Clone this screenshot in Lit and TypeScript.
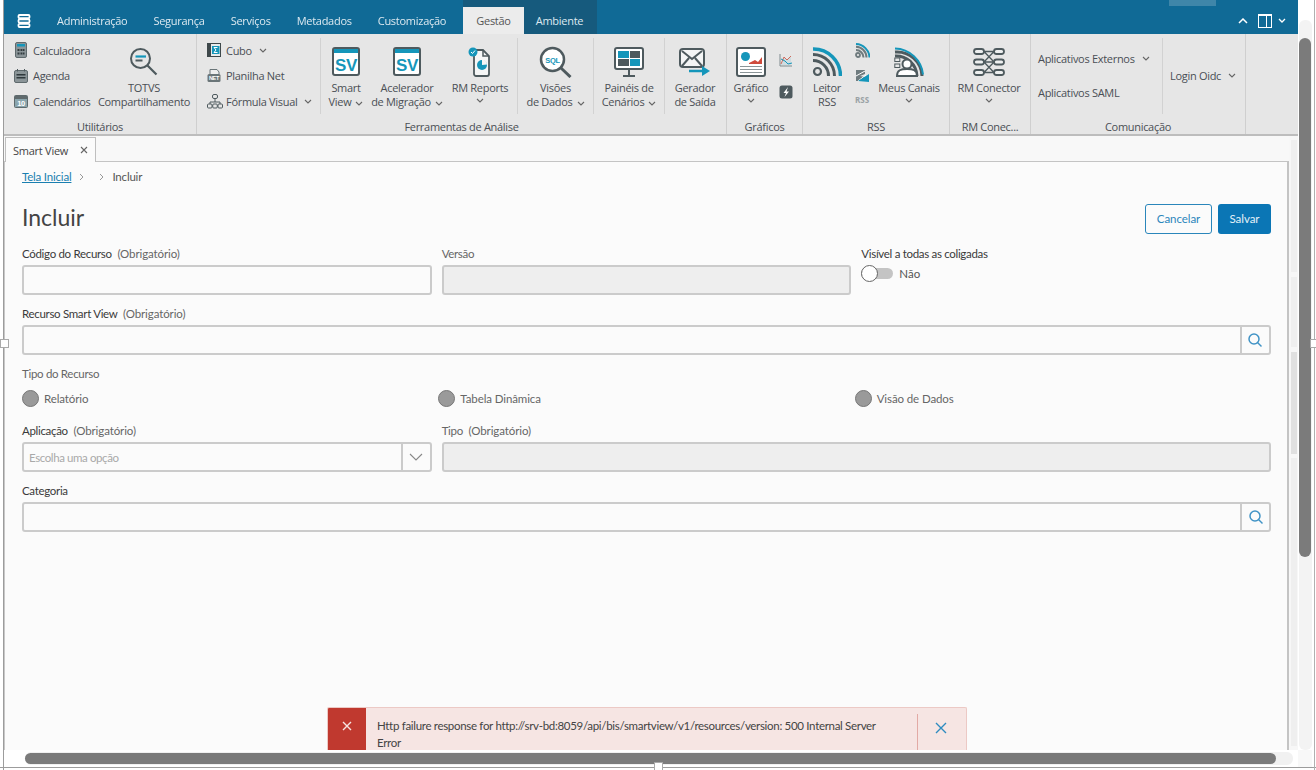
import { LitElement, html, css, svg } from "lit";
import { customElement } from "lit/decorators.js";

const D = "#4e5a5e";
const T = "#1596ba";
const chev = html`<svg class="chev" width="8" height="5" viewBox="0 0 8 5"><path d="M1 1l3 3 3-3" fill="none" stroke="#666" stroke-width="1.1"/></svg>`;

const ic = (w: number, h: number, body: any) => html`<svg width=${w} height=${h} viewBox="0 0 ${w} ${h}">${body}</svg>`;

const icons = {
  calc: ic(14, 16, svg`<rect x="1.5" y="0.5" width="11" height="15" rx="1.5" fill="#8b9598" stroke="#5f6a6d"/><rect x="3" y="2" width="8" height="2.5" fill="${T}"/><path d="M3.5 7h2v2h-2zM6.5 7h2v2h-2zM9 7h1.5v2H9zM3.5 10.500h2v2h-2zM6.5 10.500h2v2h-2zM9 10.500h1.500v2H9z" fill="#333d40"/>`),
  agenda: ic(14, 14, svg`<rect x="0.5" y="1.500" width="13" height="12" rx="1.500" fill="#8b9598" stroke="#5f6a6d"/><path d="M2.500 5h9v1.500h-9zM2.500 8h9v1.500h-9z" fill="#2f393c"/><path d="M3.500 0v2.500M10.500 0v2.500" stroke="#4e5a5e"/>`),
  cal: ic(14, 14, svg`<rect x="0.5" y="1.500" width="13" height="12" rx="1" fill="#8aa5ad" stroke="#5f6a6d"/><path d="M1 2h12v3H1z" fill="#5f6a6d"/><text x="7" y="11.800" font-size="7.500" font-family="Liberation Sans" font-weight="700" text-anchor="middle" fill="#fff">10</text>`),
  totvs: ic(30, 30, svg`<circle cx="11.500" cy="11.500" r="9.500" fill="none" stroke="${D}" stroke-width="2"/><path d="M18.500 18.500l9 9" stroke="${D}" stroke-width="2.200"/><path d="M6.500 9.500h10.500" stroke="${T}" stroke-width="2.200"/><path d="M6.500 13.500h7" stroke="${D}" stroke-width="2"/>`),
  cubo: ic(14, 14, svg`<rect x="0.500" y="0.500" width="13" height="13" fill="#e9eced" stroke="#3e484b"/><rect x="0.500" y="0.500" width="3.500" height="13" fill="#3e484b"/><rect x="5" y="3" width="7.500" height="8" fill="${T}"/><path d="M10.500 4.500H7l2 2.500-2 2.500h3.500" fill="none" stroke="#fff"/>`),
  planilha: ic(14, 15, svg`<path d="M3 6V1.500h7L12 4v2" fill="#eee" stroke="#6a7578"/><rect x="0.500" y="6" width="13" height="8" rx="1.500" fill="#6a7578"/><text x="7" y="12.300" font-size="5.500" font-weight="700" font-family="Liberation Sans" text-anchor="middle" fill="#fff">NET</text>`),
  formula: ic(16, 15, svg`<g fill="none" stroke="${D}"><rect x="5.500" y="0.500" width="5" height="4" rx="1.500"/><path d="M8 5v3M3 10V8h10v2"/><rect x="0.500" y="10" width="4.500" height="4" rx="1"/><rect x="5.750" y="10" width="4.500" height="4" rx="1"/><rect x="11" y="10" width="4.500" height="4" rx="1"/></g>`),
  sv: ic(28, 30, svg`<rect x="1" y="1" width="26" height="27" rx="2" fill="#fff" stroke="${D}" stroke-width="2"/><rect x="2" y="2" width="24" height="4" fill="${T}"/><text x="14" y="24" font-size="17" font-weight="700" font-family="Liberation Sans" text-anchor="middle" fill="${T}">SV</text>`),
  report: ic(24, 30, svg`<path d="M6 3h9l6 6v18a2 2 0 0 1-2 2H8a2 2 0 0 1-2-2z" fill="#f5f6f6" stroke="${D}" stroke-width="1.800"/><path d="M15 3v6h6" fill="none" stroke="${D}" stroke-width="1.500"/><circle cx="14" cy="18" r="5" fill="${T}"/><path d="M14 18V12.500a5 5 0 0 1 5 5z" fill="#f5f6f6"/><circle cx="5" cy="5" r="4.500" fill="${T}"/><path d="M3 5l1.500 1.500L7 3.500" fill="none" stroke="#fff"/>`),
  visoes: ic(34, 32, svg`<circle cx="13.500" cy="13.500" r="11.500" fill="#fff" stroke="${D}" stroke-width="2.500"/><text x="13.500" y="16.500" font-size="7.500" font-weight="700" font-family="Liberation Sans" text-anchor="middle" fill="${T}">SQL</text><path d="M22 22l9.500 9" stroke="${D}" stroke-width="3"/>`),
  paineis: ic(30, 30, svg`<rect x="1" y="1" width="28" height="21" rx="2" fill="#fff" stroke="${D}" stroke-width="2"/><rect x="4" y="4" width="11" height="7" fill="${T}"/><rect x="16" y="4" width="10" height="7" fill="${D}"/><rect x="4" y="12" width="11" height="7" fill="${D}"/><rect x="16" y="12" width="10" height="7" fill="${T}"/><path d="M15 22v6M9 29h12" stroke="${D}" stroke-width="2"/>`),
  gerador: ic(32, 28, svg`<rect x="1" y="1" width="24" height="18" rx="3" fill="#f4f5f5" stroke="${D}" stroke-width="2"/><path d="M3 3l10 8 10-8M3 18l7-8M23 18l-7-8" fill="none" stroke="${D}" stroke-width="2"/><path d="M10 23h14" stroke="${T}" stroke-width="2.500"/><path d="M23 18l8 5-8 5z" fill="${T}"/>`),
  grafico: ic(30, 30, svg`<rect x="1" y="1" width="28" height="28" rx="2" fill="#fff" stroke="${D}" stroke-width="2"/><circle cx="9.500" cy="9.500" r="4.500" fill="${T}"/><path d="M13 16l6-3 3 2 4-5v7H13z" fill="#cf4a3c"/><path d="M4 19.500h22M4 22.500h22M4 25.500h22" stroke="#8b9598"/>`),
  miniChart: ic(14, 14, svg`<path d="M1 1v12h12" fill="none" stroke="#7f8b8e"/><path d="M2 11l3-7 3 3 4-4v9H2z" fill="#cfdde1"/><path d="M2 11l3-7 3 3 4-4" fill="none" stroke="#cf6a5c"/><path d="M2 6l4 2 3 3 4-1" fill="none" stroke="${T}"/>`),
  miniBolt: ic(14, 14, svg`<rect x="0.500" y="0.500" width="13" height="13" rx="2.500" fill="#4e5a5e"/><path d="M9 2L4.500 8H7l-1.500 4L10 6.500H7.500z" fill="#fff"/>`),
  rss: ic(30, 30, svg`<circle cx="5.500" cy="24.500" r="3.500" fill="none" stroke="${D}" stroke-width="2.200"/><path d="M1 13.500a15.500 15.500 0 0 1 15.500 15.500" fill="none" stroke="${D}" stroke-width="3"/><path d="M1 7.500a21.500 21.500 0 0 1 21.500 21.500" fill="none" stroke="${D}" stroke-width="3"/><path d="M1 2a27 27 0 0 1 27.500 27" fill="none" stroke="${T}" stroke-width="3.500"/>`),
  rssS: ic(15, 15, svg`<circle cx="3" cy="12" r="2" fill="none" stroke="#6f7b7e" stroke-width="1.800"/><path d="M1 7a7.500 7.500 0 0 1 7.500 7.500M1 3.800a10.700 10.700 0 0 1 10.500 10.700" fill="none" stroke="#6f7b7e" stroke-width="2"/><path d="M1 1a14 14 0 0 1 13.500 13.500" fill="none" stroke="${T}" stroke-width="2"/>`),
  rssA: ic(15, 15, svg`<path d="M1 2h9v4l-5 2 5 1v4H1z" fill="#6f7b7e"/><path d="M1 8l9-5M3 13l8-6" stroke="#fff"/><path d="M3 13l11-7v8z" fill="${T}"/>`),
  meus: ic(30, 30, svg`<path d="M1 9a21 21 0 0 1 22 20M1 5a25 25 0 0 1 27 24" fill="none" stroke="${D}" stroke-width="3"/><path d="M1 1.500a29 29 0 0 1 28 26" fill="none" stroke="${T}" stroke-width="2"/><circle cx="13" cy="17" r="4.500" fill="#fff" stroke="${D}" stroke-width="2"/><path d="M3 29c0-6 4-7 10-7s10 1 10 7z" fill="#fff" stroke="${D}" stroke-width="2"/><rect x="0.800" y="11" width="5" height="3.500" fill="#e6e6e6" stroke="${D}"/><rect x="0.800" y="17" width="5" height="3.500" fill="#e6e6e6" stroke="${D}"/>`),
  conector: ic(32, 30, svg`<g fill="#eef0f0" stroke="${D}" stroke-width="1.800"><rect x="1" y="2" width="10" height="5" rx="2.500"/><rect x="21" y="2" width="10" height="5" rx="2.500"/><rect x="1" y="12.500" width="10" height="5" rx="2.500"/><rect x="21" y="12.500" width="10" height="5" rx="2.500"/><rect x="1" y="23" width="10" height="5" rx="2.500"/><rect x="21" y="23" width="10" height="5" rx="2.500"/></g><path d="M11 4.500h10M11 15h10M11 25.500h10M11 4.500l10 10.500M21 4.500L11 15M11 15l10 10.500M21 15L11 25.500" fill="none" stroke="${D}" stroke-width="1.300"/>`),
  logo: ic(14, 14, svg`<g fill="none" stroke="#fff" stroke-width="1.800"><rect x="1.500" y="1" width="11" height="3.200" rx="1"/><rect x="1.500" y="5.400" width="11" height="3.200" rx="1"/><rect x="1.500" y="9.800" width="11" height="3.200" rx="1"/></g>`),
  search: ic(16, 16, svg`<circle cx="7" cy="7" r="5" fill="none" stroke="#4093c6" stroke-width="1.500"/><path d="M10.500 10.500l4 4" stroke="#4093c6" stroke-width="1.500"/>`),
};

@customElement("app-root")
export class AppRoot extends LitElement {
  static styles = css`
    :host { display: block; width: 1316px; height: 770px; overflow: hidden; background: #fff; position: relative; font-family: "Open Sans", "Noto Sans", sans-serif; }
    * { box-sizing: border-box; }
    .stage { width: 1316px; height: 770px; position: relative; overflow: hidden; filter: blur(0.4px); }
    .win { margin-left: 4px; width: 1294px; height: 750px; display: flex; flex-direction: column; overflow: hidden; position: relative; }

    .top { height: 34px; background: #106a96; display: flex; color: #dce9f0; font-size: 11px; letter-spacing: -0.27px; flex: none; position: relative; }
    .logo { width: 40px; display: flex; align-items: center; justify-content: center; padding: 7px 0 0 0; }
    .menu { display: flex; }
    .m { padding: 7px 13px 0; display: flex; align-items: center; }
    .dark { display: flex; background: #165a7d; padding-top: 7px; width: 134px; position: absolute; left: 459px; top: 0; height: 34px; }
    .m.active { background: #ececec; color: #555; padding: 0; width: 61px; justify-content: center; }
    .m.amb { padding: 0 2px 0 0; width: 73px; justify-content: center; }
    .topright { margin-left: auto; display: flex; align-items: center; padding: 7px 0 0 0; width: 60px; overflow: hidden; }
    .topright .w { margin: 0 6px 0 10px; flex: none; }
    .topright .c { margin-left: 12px; flex: none; }
    .hl { position: absolute; left: 1165px; top: 0; width: 47px; height: 6px; background: #3f86a9; }

    .ribbon { height: 102px; background: #e6e6e6; border-bottom: 2px solid #bdbdbd; display: flex; flex: none; color: #4a4f55; font-size: 11px; letter-spacing: -0.3px; }
    .group { display: flex; flex-direction: column; border-right: 1px solid #cfcfcf; flex: none; }
    .body { height: 85px; display: flex; }
    .cap { height: 15px; text-align: center; line-height: 15px; color: #4a4f55; white-space: nowrap; overflow: hidden; }
    .smalls { display: flex; flex-direction: column; padding-top: 3.500px; flex: none; }
    .s { height: 25.500px; display: flex; align-items: center; white-space: nowrap; }
    .s .i { width: 19px; display: flex; justify-content: flex-start; flex: none; }
    .chev { margin-left: 7px; flex: none; }
    .sep { width: 1px; height: 76px; margin-top: 4px; background: #d2d2d2; flex: none; }
    .big { display: flex; flex-direction: column; align-items: center; flex: none; padding-top: 12px; text-align: center; line-height: 13.500px; white-space: nowrap; }
    .big .i { height: 32px; display: flex; align-items: center; justify-content: center; margin-bottom: 3px; }
    .big .chev { margin-left: 4px; }
    .big .under { margin: 3px 0 0; display: flex; height: 5px; }
    .big .under .chev { margin-left: 0; }
    .minis { width: 22px; display: flex; flex-direction: column; align-items: center; flex: none; }
    .minis.charts { padding-top: 19px; gap: 18px; }
    .minis.feeds { padding-top: 9px; gap: 10px; }
    .rsstxt { font-size: 8px; font-weight: 700; color: #9aa2a5; letter-spacing: 0; line-height: 9px; margin-top: 2px; }
    .plain { flex-direction: column; padding: 7px 0 0 7px; display: flex; flex: none; }
    .p { height: 34px; display: flex; align-items: center; white-space: nowrap; }
    .login { padding-left: 7px; display: flex; align-items: center; height: 83px; white-space: nowrap; }

    .tabs { height: 25px; background: #f8f8f8; position: relative; flex: none; }
    .tab { position: absolute; left: 1px; top: 1px; width: 91px; height: 25px; background: #fbfbfb; border: 1px solid #bfbfbf; border-bottom: none; display: flex; align-items: center; padding-left: 7px; font-size: 11px; color: #444; letter-spacing: -0.25px; z-index: 1; }
    .tab .x { margin-left: auto; margin-right: 7px; }

    .main { flex: 1; width: 1285px; background: #fbfbfb; border-top: 1px solid #c4c4c4; border-right: 2px solid #c4c4c4; border-left: 1px solid #c8c8c8; padding: 0 16px 0 17px; font-family: Lato, sans-serif; font-size: 11.500px; color: #444; }
    .crumb { height: 29px; display: flex; align-items: center; color: #555; letter-spacing: -0.2px; }
    .crumb a { color: #1a7fb0; text-decoration: underline; }
    .crumb .gt { margin: 0 0 0 8px; color: #999; display: flex; }
    .crumb .last { margin-left: 8px; }
    .head { height: 54px; display: flex; align-items: center; justify-content: space-between; }
    h1 { margin: 0 0 3px; font-size: 23px; font-weight: 400; color: #444; }
    .btns { display: flex; gap: 6px; margin-top: 1px; }
    .btn { height: 30px; border-radius: 3px; display: flex; align-items: center; justify-content: center; letter-spacing: -0.05px; }
    .cancel { width: 67px; border: 1.500px solid #2a86bb; color: #2b86bb; background: #fbfbfb; }
    .save { width: 53px; background: #0b76b5; color: #e4f1f8; }
    .grid { display: grid; grid-template-columns: repeat(3, 1fr); column-gap: 10px; width: 1249px; }
    .f { margin-bottom: 10px; min-width: 0; }
    .f.s2 { grid-column: span 2; }
    .f.s3 { grid-column: span 3; }
    .lab { height: 18px; line-height: 18px; margin-bottom: 2px; color: #3a3a3a; white-space: nowrap; letter-spacing: -0.31px; }
    .lab.m2 { color: #666; }
    .lab span { color: #666; margin-left: 3px; letter-spacing: -0.1px; }
    .inp { height: 30px; border: 2px solid #cbcbcb; border-radius: 3px; background: #fbfbfb; display: flex; align-items: stretch; color: #aaa; }
    .inp.off { background: #eeeeee; }
    .inp .ph { flex: 1; padding-left: 5px; display: flex; align-items: center; color: #a9a9a9; letter-spacing: -0.4px; }
    .inp .b { width: 29px; flex: none; border-left: 2px solid #cbcbcb; display: flex; align-items: center; justify-content: center; }
    .toggle { display: flex; align-items: center; height: 16px; margin-top: 2px; color: #555; }
    .track { width: 32px; height: 11px; background: #c4c4c4; border-radius: 6px; position: relative; margin-right: 6px; }
    .knob { position: absolute; left: 0; top: -3px; width: 17px; height: 17px; background: #fff; border: 1.500px solid #666; border-radius: 50%; }
    .type { margin-bottom: 5px; }
    .radios { display: grid; grid-template-columns: repeat(3, 1fr); width: 1249px; height: 20px; margin-bottom: 14px; }
    .r { display: flex; align-items: center; color: #666; gap: 5px; letter-spacing: -0.1px; }
    .r i { width: 17px; height: 17px; border-radius: 50%; background: #9a9a9a; border: 1.500px solid #777; display: block; }

    .toast { position: absolute; left: 327px; top: 707px; width: 640px; height: 43px; overflow: hidden; background: #f6e5e3; border: 1px solid #ecc9c5; border-bottom: none; border-radius: 2px 2px 0 0; display: flex; font-family: Lato, sans-serif; font-size: 11.500px; color: #444; }
    .toast .ic { width: 38px; background: #c0392f; height: 100%; display: flex; justify-content: center; padding-top: 13px; flex: none; }
    .toast .msg { width: 552px; padding: 4px 30px 0 11px; margin-top: 6px; line-height: 16.500px; letter-spacing: -0.31px; border-right: 1px solid #e2aaa5; flex: none; }
    .toast .cl { flex: 1; display: flex; justify-content: center; padding-top: 14px; margin-left: -3px; }

    .edge { position: absolute; background: #9c9c9c; }
    .edgeL { left: 3px; top: 0; width: 1px; height: 770px; }
    .edgeB { left: 0; top: 767px; width: 1316px; height: 1px; }
    .edgeR { left: 1314px; top: 0; width: 1px; height: 770px; background: #b0b0b0; }
    .grip { position: absolute; width: 9px; height: 9px; background: #fff; border: 1px solid #aaa; }
    .vtrack { position: absolute; left: 1299px; top: 20px; width: 13px; height: 730px; background: #f3f3f3; border-radius: 6px; }
    .vthumb { position: absolute; left: 1299px; top: 38px; width: 12px; height: 519px; background: #7b7b7b; border-radius: 6px; }
    .htrack { position: absolute; left: 25px; top: 752px; width: 1268px; height: 13px; background: #f1f1f1; border-radius: 6px; }
    .hthumb { position: absolute; left: 25px; top: 753px; width: 1251px; height: 11px; background: #7b7b7b; border-radius: 6px; }
    .corner { position: absolute; left: 1298px; top: 750px; width: 14px; height: 17px; background: #f8f8f8; }
    .ivbar { position: absolute; left: 1291px; width: 6px; background: #efefef; }
    .ivdark { background: #e0e0e0; }
    .ivstrip { position: absolute; left: 1289px; top: 136px; width: 9px; height: 614px; background: #f7f7f7; }
  `;

  private small(icon: any, label: string, ch = false) {
    return html`<div class="s"><span class="i">${icon}</span>${label}${ch ? chev : ""}</div>`;
  }

  private big(w: number, icon: any, l1: string, l2: any, ch: "" | "inline" | "under" = "") {
    return html`<div class="big" style="width:${w}px">
      <span class="i">${icon}</span>
      <span>${l1}</span>
      ${l2 ? html`<span>${l2}${ch === "inline" ? chev : ""}</span>` : ""}
      ${ch === "under" ? html`<span class="under">${chev}</span>` : ""}
    </div>`;
  }

  private field(label: string, opt: string, off = false, cls = "", muted = false) {
    return html`<div class="f ${cls}">
      <div class="lab ${muted ? "m2" : ""}">${label}${opt ? html` <span>${opt}</span>` : ""}</div>
      <div class="inp ${off ? "off" : ""}"></div>
    </div>`;
  }

  private lookup(label: string, opt: string) {
    return html`<div class="f s3">
      <div class="lab">${label}${opt ? html` <span>${opt}</span>` : ""}</div>
      <div class="inp"><div class="ph"></div><div class="b">${icons.search}</div></div>
    </div>`;
  }

  render() {
    return html`<div class="stage">
      <div class="win">
        <div class="top">
          <div class="logo">${icons.logo}</div>
          <div class="menu">
            <div class="m">Administração</div>
            <div class="m">Segurança</div>
            <div class="m">Serviços</div>
            <div class="m">Metadados</div>
            <div class="m">Customização</div>
          </div>
          <div class="dark">
            <div class="m active">Gestão</div>
            <div class="m amb">Ambiente</div>
          </div>
          <div class="hl"></div>
          <div class="topright">
            <svg width="10" height="6" viewBox="0 0 10 6" style="flex:none"><path d="M1 5l4-4 4 4" fill="none" stroke="#fff" stroke-width="1.500"/></svg>
            <svg class="w" width="14" height="14" viewBox="0 0 14 14"><rect x="0.500" y="0.500" width="13" height="13" fill="none" stroke="#fff"/><path d="M8.500 0.500v13" stroke="#fff"/><path d="M0.500 0.500h13v1.500h-13z" fill="#fff"/></svg>
            <svg width="8" height="5" viewBox="0 0 8 5" style="flex:none"><path d="M1 1l3 3 3-3" fill="none" stroke="#fff" stroke-width="1.300"/></svg>
            <svg class="c" width="12" height="14" viewBox="0 0 12 14"><circle cx="7" cy="7" r="6" fill="none" stroke="#c9dde8"/></svg>
          </div>
        </div>

        <div class="ribbon">
          <div class="group" style="width:193px">
            <div class="body">
              <div class="smalls" style="width:94px;padding-left:10px">
                ${this.small(icons.calc, "Calculadora")}
                ${this.small(icons.agenda, "Agenda")}
                ${this.small(icons.cal, "Calendários")}
              </div>
              ${this.big(92, icons.totvs, "TOTVS", "Compartilhamento")}
            </div>
            <div class="cap">Utilitários</div>
          </div>

          <div class="group" style="width:530px">
            <div class="body">
              <div class="smalls" style="width:123px;padding-left:10px">
                ${this.small(icons.cubo, "Cubo", true)}
                ${this.small(icons.planilha, "Planilha Net")}
                ${this.small(icons.formula, "Fórmula Visual", true)}
              </div>
              <div class="sep"></div>
              ${this.big(50, icons.sv, "Smart", "View", "inline")}
              ${this.big(72, icons.sv, "Acelerador", "de Migração", "inline")}
              ${this.big(74, icons.report, "RM Reports", "", "under")}
              <div class="sep"></div>
              ${this.big(75, icons.visoes, "Visões", "de Dados", "inline")}
              <div class="sep"></div>
              ${this.big(70, icons.paineis, "Painéis de", "Cenários", "inline")}
              <div class="sep"></div>
              ${this.big(60, icons.gerador, "Gerador", "de Saída")}
            </div>
            <div class="cap">Ferramentas de Análise</div>
          </div>

          <div class="group" style="width:76px">
            <div class="body">
              ${this.big(48, icons.grafico, "Gráfico", "", "under")}
              <div class="minis charts">${icons.miniChart}${icons.miniBolt}</div>
            </div>
            <div class="cap">Gráficos</div>
          </div>

          <div class="group" style="width:147px">
            <div class="body">
              ${this.big(48, icons.rss, "Leitor", "RSS")}
              <div class="minis feeds">${icons.rssS}${icons.rssA}<span class="rsstxt">RSS</span></div>
              ${this.big(72, icons.meus, "Meus Canais", "", "under")}
            </div>
            <div class="cap">RSS</div>
          </div>

          <div class="group" style="width:81px">
            <div class="body">${this.big(78, icons.conector, "RM Conector", "", "under")}</div>
            <div class="cap">RM Conec...</div>
          </div>

          <div class="group" style="width:215px">
            <div class="body">
              <div class="plain" style="width:131px">
                <div class="p">Aplicativos Externos${chev}</div>
                <div class="p">Aplicativos SAML</div>
              </div>
              <div class="sep"></div>
              <div class="login">Login Oidc${chev}</div>
            </div>
            <div class="cap">Comunicação</div>
          </div>
        </div>

        <div class="tabs">
          <div class="tab">Smart View
            <svg class="x" width="8" height="8" viewBox="0 0 8 8"><path d="M1 1l6 6M7 1L1 7" stroke="#666" stroke-width="1.100"/></svg>
          </div>
        </div>

        <div class="main">
          <div class="crumb">
            <a>Tela Inicial</a>
            <span class="gt"><svg width="5" height="8" viewBox="0 0 5 8"><path d="M1 1l3 3-3 3" fill="none" stroke="#999"/></svg></span>
            <span class="gt" style="margin-left:15px"><svg width="5" height="8" viewBox="0 0 5 8"><path d="M1 1l3 3-3 3" fill="none" stroke="#999"/></svg></span>
            <span class="last">Incluir</span>
          </div>
          <div class="head">
            <h1>Incluir</h1>
            <div class="btns"><div class="btn cancel">Cancelar</div><div class="btn save">Salvar</div></div>
          </div>
          <div class="grid">
            ${this.field("Código do Recurso", "(Obrigatório)")}
            ${this.field("Versão", "", true, "", true)}
            <div class="f">
              <div class="lab">Visível a todas as coligadas</div>
              <div class="toggle"><div class="track"><div class="knob"></div></div>Não</div>
            </div>
            ${this.lookup("Recurso Smart View", "(Obrigatório)")}
          </div>
          <div class="lab m2 type">Tipo do Recurso</div>
          <div class="radios">
            <div class="r"><i></i>Relatório</div>
            <div class="r"><i></i>Tabela Dinâmica</div>
            <div class="r"><i></i>Visão de Dados</div>
          </div>
          <div class="grid">
            <div class="f">
              <div class="lab">Aplicação <span>(Obrigatório)</span></div>
              <div class="inp"><div class="ph">Escolha uma opção</div><div class="b"><svg width="14" height="8" viewBox="0 0 14 8"><path d="M1 1l6 6 6-6" fill="none" stroke="#888" stroke-width="1.100"/></svg></div></div>
            </div>
            ${this.field("Tipo", "(Obrigatório)", true, "s2", true)}
            ${this.lookup("Categoria", "")}
          </div>
        </div>
      </div>

      <div class="ivstrip"></div>
      <div class="ivbar" style="top:140px;height:132px"></div>
      <div class="ivbar" style="top:277px;height:70px"></div>
      <div class="ivbar ivdark" style="top:352px;height:102px"></div>
      <div class="ivbar" style="top:458px;height:288px"></div>

      <div class="toast">
        <div class="ic"><svg width="10" height="10" viewBox="0 0 10 10"><path d="M1 1l8 8M9 1L1 9" stroke="#f6e5e3" stroke-width="1.400"/></svg></div>
        <div class="msg">Http failure response for http://srv-bd:8059/api/bis/smartview/v1/resources/version: 500 Internal Server Error</div>
        <div class="cl"><svg width="12" height="12" viewBox="0 0 12 12"><path d="M1 1l10 10M11 1L1 11" stroke="#2e8bc0" stroke-width="1.400"/></svg></div>
      </div>

      <div class="corner"></div>
      <div class="vtrack"></div>
      <div class="vthumb"></div>
      <div class="htrack"></div>
      <div class="hthumb"></div>
      <div class="edge edgeL"></div>
      <div class="edge edgeB"></div>
      <div class="edge edgeR"></div>
      <div class="grip" style="left:0;top:339px"></div>
      <div class="grip" style="left:1310px;top:339px"></div>
      <div class="grip" style="left:654px;top:762px"></div>
    </div>`;
  }
}
